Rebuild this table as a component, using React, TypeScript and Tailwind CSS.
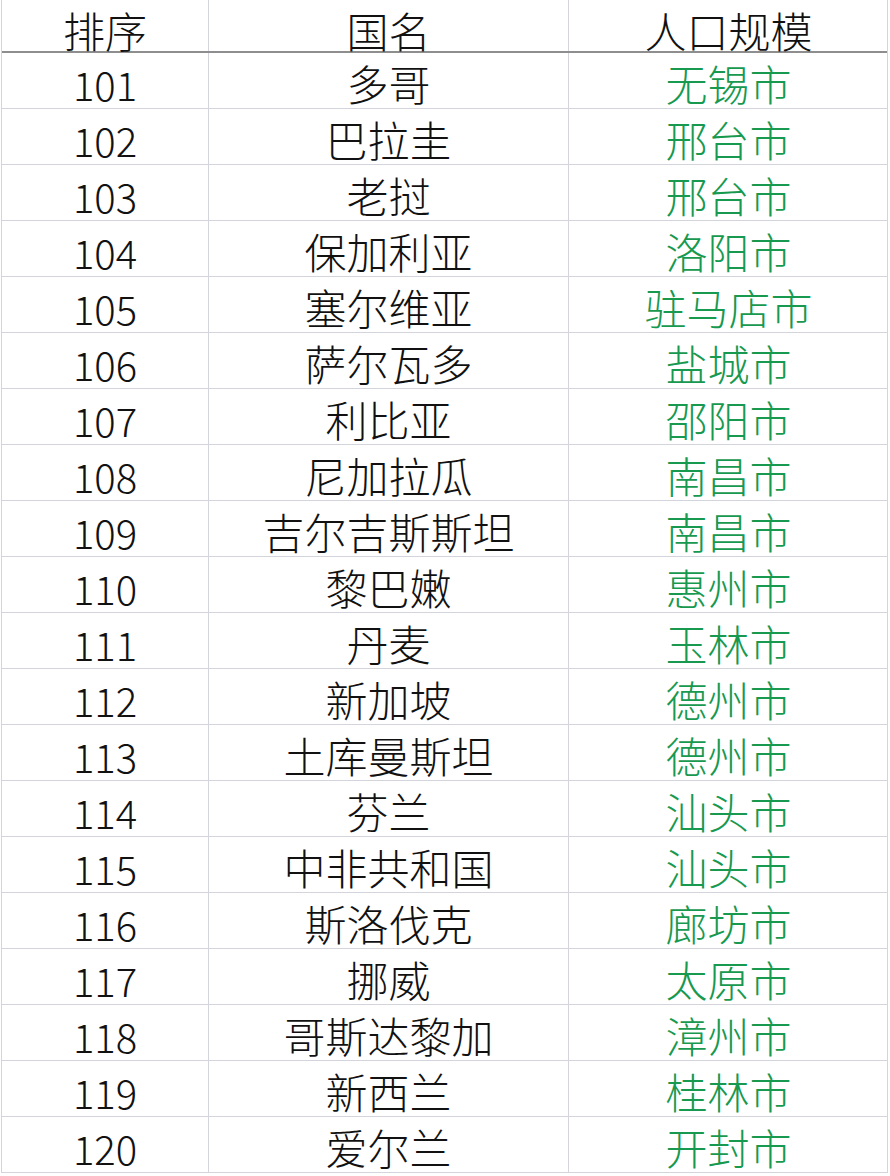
import React from "react";

const rows: [string, string, string][] = [
  ["101", "多哥", "无锡市"],
  ["102", "巴拉圭", "邢台市"],
  ["103", "老挝", "邢台市"],
  ["104", "保加利亚", "洛阳市"],
  ["105", "塞尔维亚", "驻马店市"],
  ["106", "萨尔瓦多", "盐城市"],
  ["107", "利比亚", "邵阳市"],
  ["108", "尼加拉瓜", "南昌市"],
  ["109", "吉尔吉斯斯坦", "南昌市"],
  ["110", "黎巴嫩", "惠州市"],
  ["111", "丹麦", "玉林市"],
  ["112", "新加坡", "德州市"],
  ["113", "土库曼斯坦", "德州市"],
  ["114", "芬兰", "汕头市"],
  ["115", "中非共和国", "汕头市"],
  ["116", "斯洛伐克", "廊坊市"],
  ["117", "挪威", "太原市"],
  ["118", "哥斯达黎加", "漳州市"],
  ["119", "新西兰", "桂林市"],
  ["120", "爱尔兰", "开封市"],
];

const font = { fontFamily: '"Noto Sans CJK SC", "Noto Sans", sans-serif' };

export default function App() {
  return (
    <div className="w-[890px] h-[1176px] bg-white overflow-hidden font-light" style={font}>
      <div className="ml-[1px] w-[887px] border-l border-r border-[#d4d4dc]">
        <div className="grid grid-cols-[207px_360px_319px] h-[53px] border-b-2 border-[#8e8e8e]">
          <div className="flex items-center justify-center border-r border-[#d4d4dc] text-[42px] leading-none text-[#111] pt-[8px]">排序</div>
          <div className="flex items-center justify-center border-r border-[#d4d4dc] text-[42px] leading-none text-[#111] pt-[8px]">国名</div>
          <div className="flex items-center justify-center text-[42px] leading-none text-[#111] pt-[8px]">人口规模</div>
        </div>
        {rows.map((r) => (
          <div key={r[0]} className="grid grid-cols-[207px_360px_319px] h-[56px] border-b border-[#d4d4dc]">
            <div className="flex items-center justify-center border-r border-[#d4d4dc] text-[40px] leading-[1.15] text-[#111] pt-[6px]">{r[0]}</div>
            <div className="flex items-center justify-center border-r border-[#d4d4dc] text-[42px] leading-[1.15] text-[#111] pt-[6px]">{r[1]}</div>
            <div className="flex items-center justify-center text-[42px] leading-[1.15] text-[#17994f] pt-[6px]">{r[2]}</div>
          </div>
        ))}
      </div>
    </div>
  );
}
